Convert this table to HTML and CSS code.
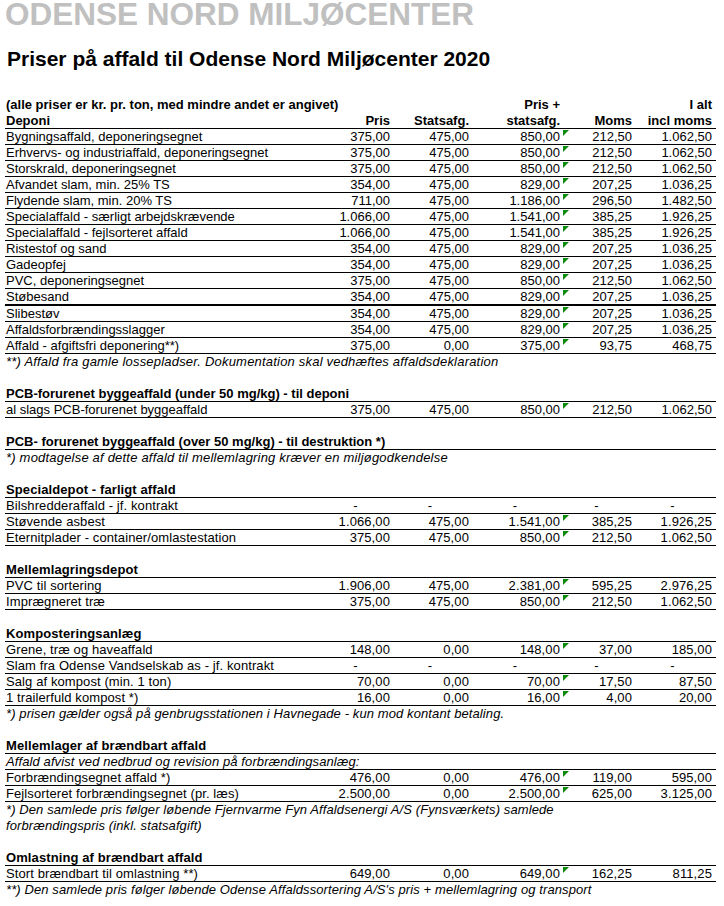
FILE: index.html
```html
<!DOCTYPE html>
<html lang="da">
<head>
<meta charset="utf-8">
<title>Priser på affald</title>
<link rel="stylesheet" href="styles.css">
</head>
<body>
<div class="title">ODENSE NORD MILJØCENTER</div>
<div class="subtitle">Priser på affald til Odense Nord Miljøcenter 2020</div>

<div class="sheet">
  <div class="row b"><span class="span3">(alle priser er kr. pr. ton, med mindre andet er angivet)</span><span class="num c4">Pris +</span><span class="num c6">I alt</span></div>
  <div class="row b ln"><span>Deponi</span><span class="num">Pris</span><span class="num">Statsafg.</span><span class="num">statsafg.</span><span class="num">Moms</span><span class="num">incl moms</span></div>
  <div class="row ln"><span>Bygningsaffald, deponeringsegnet</span><span class="num">375,00</span><span class="num">475,00</span><span class="num t">850,00<i class="tri"></i></span><span class="num">212,50</span><span class="num">1.062,50</span></div>
  <div class="row ln"><span>Erhvervs- og industriaffald, deponeringsegnet</span><span class="num">375,00</span><span class="num">475,00</span><span class="num t">850,00<i class="tri"></i></span><span class="num">212,50</span><span class="num">1.062,50</span></div>
  <div class="row ln"><span>Storskrald, deponeringsegnet</span><span class="num">375,00</span><span class="num">475,00</span><span class="num t">850,00<i class="tri"></i></span><span class="num">212,50</span><span class="num">1.062,50</span></div>
  <div class="row ln"><span>Afvandet slam, min. 25% TS</span><span class="num">354,00</span><span class="num">475,00</span><span class="num t">829,00<i class="tri"></i></span><span class="num">207,25</span><span class="num">1.036,25</span></div>
  <div class="row ln"><span>Flydende slam, min. 20% TS</span><span class="num">711,00</span><span class="num">475,00</span><span class="num t">1.186,00<i class="tri"></i></span><span class="num">296,50</span><span class="num">1.482,50</span></div>
  <div class="row ln"><span>Specialaffald - særligt arbejdskrævende</span><span class="num">1.066,00</span><span class="num">475,00</span><span class="num t">1.541,00<i class="tri"></i></span><span class="num">385,25</span><span class="num">1.926,25</span></div>
  <div class="row ln"><span>Specialaffald - fejlsorteret affald</span><span class="num">1.066,00</span><span class="num">475,00</span><span class="num t">1.541,00<i class="tri"></i></span><span class="num">385,25</span><span class="num">1.926,25</span></div>
  <div class="row ln"><span>Ristestof og sand</span><span class="num">354,00</span><span class="num">475,00</span><span class="num t">829,00<i class="tri"></i></span><span class="num">207,25</span><span class="num">1.036,25</span></div>
  <div class="row ln"><span>Gadeopfej</span><span class="num">354,00</span><span class="num">475,00</span><span class="num t">829,00<i class="tri"></i></span><span class="num">207,25</span><span class="num">1.036,25</span></div>
  <div class="row ln"><span>PVC, deponeringsegnet</span><span class="num">375,00</span><span class="num">475,00</span><span class="num t">850,00<i class="tri"></i></span><span class="num">212,50</span><span class="num">1.062,50</span></div>
  <div class="row ln thick"><span>Støbesand</span><span class="num">354,00</span><span class="num">475,00</span><span class="num t">829,00<i class="tri"></i></span><span class="num">207,25</span><span class="num">1.036,25</span></div>
  <div class="row ln"><span>Slibestøv</span><span class="num">354,00</span><span class="num">475,00</span><span class="num t">829,00<i class="tri"></i></span><span class="num">207,25</span><span class="num">1.036,25</span></div>
  <div class="row ln"><span>Affaldsforbrændingsslagger</span><span class="num">354,00</span><span class="num">475,00</span><span class="num t">829,00<i class="tri"></i></span><span class="num">207,25</span><span class="num">1.036,25</span></div>
  <div class="row ln"><span>Affald - afgiftsfri deponering**)</span><span class="num">375,00</span><span class="num">0,00</span><span class="num t">375,00<i class="tri"></i></span><span class="num">93,75</span><span class="num">468,75</span></div>
  <div class="row it"><span class="full note">**) Affald fra gamle lossepladser. Dokumentation skal vedhæftes affaldsdeklaration</span></div>
  <div class="row"></div>

  <div class="row b ln top"><span class="full">PCB-forurenet byggeaffald (under 50 mg/kg) - til deponi</span></div>
  <div class="row ln"><span>al slags PCB-forurenet byggeaffald</span><span class="num">375,00</span><span class="num">475,00</span><span class="num t">850,00<i class="tri"></i></span><span class="num">212,50</span><span class="num">1.062,50</span></div>
  <div class="row"></div>
  <div class="row b ln"><span class="full">PCB- forurenet byggeaffald (over 50 mg/kg) - til destruktion *)</span></div>
  <div class="row it"><span class="full note">*) modtagelse af dette affald til mellemlagring kræver en miljøgodkendelse</span></div>
  <div class="row"></div>

  <div class="lower">
    <div class="row b ln top"><span class="full">Specialdepot - farligt affald</span></div>
    <div class="row ln"><span>Bilshredderaffald - jf. kontrakt</span><span class="dash">-</span><span class="dash">-</span><span class="dash">-</span><span class="dash">-</span><span class="dash">-</span></div>
    <div class="row ln"><span>Støvende asbest</span><span class="num">1.066,00</span><span class="num">475,00</span><span class="num t">1.541,00<i class="tri"></i></span><span class="num">385,25</span><span class="num">1.926,25</span></div>
    <div class="row ln"><span>Eternitplader - container/omlastestation</span><span class="num">375,00</span><span class="num">475,00</span><span class="num t">850,00<i class="tri"></i></span><span class="num">212,50</span><span class="num">1.062,50</span></div>
    <div class="row"></div>

    <div class="row b ln top"><span class="full">Mellemlagringsdepot</span></div>
    <div class="row ln"><span>PVC til sortering</span><span class="num">1.906,00</span><span class="num">475,00</span><span class="num t">2.381,00<i class="tri"></i></span><span class="num">595,25</span><span class="num">2.976,25</span></div>
    <div class="row ln"><span>Imprægneret træ</span><span class="num">375,00</span><span class="num">475,00</span><span class="num t">850,00<i class="tri"></i></span><span class="num">212,50</span><span class="num">1.062,50</span></div>
    <div class="row"></div>

    <div class="row b ln top"><span class="full">Komposteringsanlæg</span></div>
    <div class="row ln"><span>Grene, træ og haveaffald</span><span class="num">148,00</span><span class="num">0,00</span><span class="num t">148,00<i class="tri"></i></span><span class="num">37,00</span><span class="num">185,00</span></div>
    <div class="row ln"><span>Slam fra Odense Vandselskab as - jf. kontrakt</span><span class="dash">-</span><span class="dash">-</span><span class="dash">-</span><span class="dash">-</span><span class="dash">-</span></div>
    <div class="row ln"><span>Salg af kompost (min. 1 ton)</span><span class="num">70,00</span><span class="num">0,00</span><span class="num t">70,00<i class="tri"></i></span><span class="num">17,50</span><span class="num">87,50</span></div>
    <div class="row ln"><span>1 trailerfuld kompost *)</span><span class="num">16,00</span><span class="num">0,00</span><span class="num t">16,00<i class="tri"></i></span><span class="num">4,00</span><span class="num">20,00</span></div>
    <div class="row it"><span class="full">*) prisen gælder også på genbrugsstationen i Havnegade - kun mod kontant betaling.</span></div>
    <div class="row"></div>

    <div class="row b ln"><span class="full">Mellemlager af brændbart affald</span></div>
    <div class="row it ln"><span class="full">Affald afvist ved nedbrud og revision på forbrændingsanlæg:</span></div>
    <div class="row ln"><span>Forbrændingsegnet affald *)</span><span class="num">476,00</span><span class="num">0,00</span><span class="num t">476,00<i class="tri"></i></span><span class="num">119,00</span><span class="num">595,00</span></div>
    <div class="row ln"><span>Fejlsorteret forbrændingsegnet (pr. læs)</span><span class="num">2.500,00</span><span class="num">0,00</span><span class="num t">2.500,00<i class="tri"></i></span><span class="num">625,00</span><span class="num">3.125,00</span></div>
    <div class="row it"><span class="full">*) Den samlede pris følger løbende Fjernvarme Fyn Affaldsenergi A/S (Fynsværkets) samlede</span></div>
    <div class="row it"><span class="full">forbrændingspris (inkl. statsafgift)</span></div>
    <div class="row"></div>

    <div class="row b ln"><span class="full">Omlastning af brændbart affald</span></div>
    <div class="row ln"><span>Stort brændbart til omlastning **)</span><span class="num">649,00</span><span class="num">0,00</span><span class="num t">649,00<i class="tri"></i></span><span class="num">162,25</span><span class="num">811,25</span></div>
    <div class="row it"><span class="full">**) Den samlede pris følger løbende Odense Affaldssortering A/S's pris + mellemlagring og transport</span></div>
  </div>
</div>
</body>
</html>
```

FILE: styles.css
```css
html, body {
  margin: 0;
  padding: 0;
  background: #ffffff;
}

body {
  font-family: "Liberation Sans", Arial, sans-serif;
  color: #000000;
}

.title {
  height: 28px;
  line-height: 28px;
  font-size: 31.5px;
  font-weight: bold;
  color: #c0c0c0;
  padding-left: 5px;
  white-space: nowrap;
}

.subtitle {
  margin-top: 20px;
  height: 22px;
  line-height: 22px;
  font-size: 21px;
  font-weight: bold;
  padding-left: 7px;
  white-space: nowrap;
}

.sheet {
  margin-top: 27px;
  margin-left: 5px;
  width: 711px;
  font-size: 13px;
}

.row {
  display: grid;
  grid-template-columns: 315px 70px 79px 91px 72px 80px;
  padding-right: 4px;
  height: 16px;
  box-sizing: border-box;
  border-bottom: 1px solid transparent;
  line-height: 15px;
  white-space: nowrap;
}

.row > span {
  padding-left: 1px;
}

.ln {
  border-bottom-color: #000000;
}

.thick {
  border-bottom-width: 2px;
  height: 17px;
}

.b {
  font-weight: bold;
}

.it {
  font-style: italic;
}

.note {
  letter-spacing: 0.2px;
}

.full {
  grid-column: 1 / -1;
}

.span3 {
  grid-column: 1 / 4;
}

.c4 {
  grid-column: 4;
}

.c6 {
  grid-column: 6;
}

.num {
  text-align: right;
}

.dash {
  text-align: center;
  padding-left: 6px;
}

.t {
  position: relative;
}

.tri {
  position: absolute;
  left: calc(100% + 3px);
  top: 1px;
  width: 0;
  height: 0;
  border-top: 6px solid #0b8a0b;
  border-right: 6px solid transparent;
}

.lower .row {
  font-size: 13px;
  letter-spacing: 0.1px;
}
```
